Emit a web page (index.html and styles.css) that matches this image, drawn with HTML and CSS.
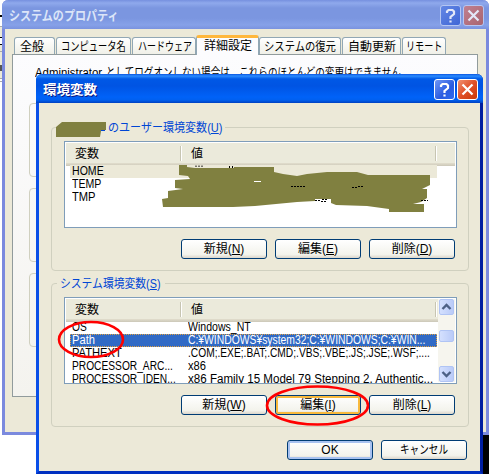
FILE: index.html
```html
<!DOCTYPE html>
<html lang="ja">
<head>
<meta charset="utf-8">
<title>環境変数</title>
<link rel="stylesheet" href="styles.css">
</head>
<body>
<div class="desktop">
  <div class="behind"></div>
  <div class="dark"></div>

  <section class="window inactive">
    <header class="titlebar">
      <h1><b class="t-prop">システムのプロパティ</b></h1>
      <span class="cap help"><svg viewBox="0 0 21 21"><path d="M7 8V6.500L8.500 5h4L14 6.500v2.500L10.500 12v2M10.500 15.500v2"/></svg></span>
      <span class="cap close"><svg viewBox="0 0 21 21"><path d="M5.500 5.500l10 10M15.500 5.500l-10 10"/></svg></span>
    </header>
    <div class="props">
      <nav class="tabs">
        <span class="tab w1"><b>全般</b></span>
        <span class="tab w2"><b>コンピュータ名</b></span>
        <span class="tab w3"><b>ハードウェア</b></span>
        <span class="tab w4 active"><b>詳細設定</b></span>
        <span class="tab w5"><b>システムの復元</b></span>
        <span class="tab w6"><b>自動更新</b></span>
        <span class="tab w7"><b>リモート</b></span>
      </nav>
      <div class="page">
        <p><span class="latin"><b>Administrator</b></span><b>としてログオンしない場合は、これらのほとんどの変更はできません。</b></p>
        <div class="box b1"></div>
        <div class="box b2"></div>
        <div class="box b3"></div>
      </div>
    </div>
  </section>

  <section class="window dialog">
    <header class="titlebar">
      <h1><b class="t-env">環境変数</b></h1>
      <span class="cap help"><svg viewBox="0 0 21 21"><path d="M7 8V6.500L8.500 5h4L14 6.500v2.500L10.500 12v2M10.500 15.500v2"/></svg></span>
      <span class="cap close"><svg viewBox="0 0 21 21"><path d="M5.500 5.500l10 10M15.500 5.500l-10 10"/></svg></span>
    </header>
    <div class="body">
      <fieldset class="group user">
        <legend><b>のユーザー環境変数(<u>U</u>)</b></legend>
        <div class="list">
          <div class="head"><span class="c1">変数</span><span class="c2">値</span></div>
          <div class="rows">
            <div class="row soft"><span class="c1"><b class="s88">HOME</b></span></div>
            <div class="row"><span class="c1"><b class="s88">TEMP</b></span></div>
            <div class="row"><span class="c1"><b class="s92">TMP</b></span></div>
          </div>
        </div>
        <div class="buttons">
          <button>新規(<u>N</u>)</button><button>編集(<u>E</u>)</button><button>削除(<u>D</u>)</button>
        </div>
      </fieldset>
      <fieldset class="group system">
        <legend><b>システム環境変数(<u>S</u>)</b></legend>
        <div class="list">
          <div class="head"><span class="c1">変数</span><span class="c2">値</span></div>
          <div class="rows">
            <div class="row"><span class="c1"><b class="s85">OS</b></span><span class="c2"><b class="s88">Windows_NT</b></span></div>
            <div class="row selected"><span class="c1"><b class="s92">Path</b></span><span class="c2"><b class="s86">C:¥WINDOWS¥system32;C:¥WINDOWS;C:¥WIN...</b></span></div>
            <div class="row"><span class="c1"><b class="s92">PATHEXT</b></span><span class="c2"><b class="s85">.COM;.EXE;.BAT;.CMD;.VBS;.VBE;.JS;.JSE;.WSF;....</b></span></div>
            <div class="row"><span class="c1"><b class="s85">PROCESSOR_ARC...</b></span><span class="c2"><b class="s92">x86</b></span></div>
            <div class="row"><span class="c1"><b class="s85">PROCESSOR_IDEN...</b></span><span class="c2"><b class="s97">x86 Family 15 Model 79 Stepping 2, Authentic...</b></span></div>
          </div>
          <div class="scroll">
            <span class="arrow"><svg viewBox="0 0 15 16"><path d="M3.500 10l4-4 4 4"/></svg></span>
            <span class="thumb"></span>
            <span class="arrow"><svg viewBox="0 0 15 16"><path d="M3.500 6l4 4 4-4"/></svg></span>
          </div>
        </div>
        <div class="buttons">
          <button>新規(<u>W</u>)</button><button class="hot">編集(<u>I</u>)</button><button>削除(<u>L</u>)</button>
        </div>
      </fieldset>
      <div class="buttons actions"><button class="default">OK</button><button class="cancel"><b>キャンセル</b></button></div>
    </div>
  </section>

  <svg class="marks" viewBox="0 0 489 474">
    <g class="paint">
      <path d="M56 127l6-5h44v8h-5v1l-1 6H56z"/>
      <path d="M179 165h8v2l8 1h39v-1h40v5l9 2 14 2 10-2 20-2h30l11 3h62v10l-8 4h5v9l-6 4-8 2h11v8h-35v-3l-22-3-31-1-5-2v-4h-16v2l-18 1-42 4-22 1h-70l-1-8 6-1v-7l15-2-8-1v-8l15-1-2-3-9-1z"/>
    </g>
    <path class="scraps" d="M196 167v-1.500M199 167v-1.500M202 167v-1.500M229.500 168v-2M232.500 168v-2M291 186.500h15M352 187.500h5M358 186.500h5M315 200.500h5M321 201.500h6M322 199.500h6M421 200.500h7"/>
    <path class="gap" d="M254 181.500h7"/>
    <path class="tail" d="M101 130.500h4"/>
    <ellipse cx="91" cy="339.500" rx="32" ry="17.500"/>
    <ellipse cx="317.500" cy="405.500" rx="50.500" ry="19"/>
  </svg>
</div>
</body>
</html>
```
FILE: styles.css
```css
* { box-sizing: border-box; }
body { margin: 0; }
.desktop {
  position: relative; width: 489px; height: 474px; overflow: hidden; background: #fff;
  font: 12px/13px "Liberation Sans", "Noto Sans CJK JP", sans-serif; color: #000;
}
.behind {
  position: absolute; left: 0; top: 0; width: 4px; height: 82px;
  background: linear-gradient(#fff 15px, #000 15px 17px, #fff 17px 26px, #aaa 26px 27px, #ece9d8 27px 37px, #000 37px 38px, #fff 38px 44px, #000 44px 45px, #ece9d8 45px 51px, #aaa 51px 52px, #ece9d8 52px 65px, #555 65px 71px, #ece9d8 71px 78px, #aaa 78px 79px, #fff 79px 81px, #aaa 81px);
}
.dark { position: absolute; left: 483px; top: 435px; width: 6px; height: 39px; background: #000; }

.window { position: absolute; border-style: solid; border-width: 0 3px 3px; background: #ece9d8; }
.inactive { left: 2px; top: 0; width: 487px; height: 435px; border-color: #7b8ade; border-radius: 6px 6px 0 0; }
.dialog { left: 36px; top: 74px; width: 447px; height: 400px; border-color: #0a4fe8; border-right-color: #001ea0; border-bottom-color: #0030c0; border-radius: 6px 6px 0 0; }
.titlebar { display: flex; align-items: center; gap: 2px; height: 29px; margin: 0 -3px; padding: 2px 5px 0 7px; border-radius: 6px 6px 0 0; }
.inactive .titlebar { background: linear-gradient(#7690df 0, #8fa9ec 3px, #7b96e0 8px, #7b96e0 18px, #86a1e8 25px, #7a93df 29px); }
.dialog .titlebar { background: linear-gradient(#0a55e0 0, #2b8cff 2px, #0058e6 5px, #0054e3 12px, #0062f8 23px, #0060f0 26px, #0040c0 29px); }
h1 { flex: 1; margin: 0; font-size: 13px; line-height: 16px; font-weight: 700; color: #fff; white-space: nowrap; }
.inactive h1 { color: #dce5f8; }
.dialog h1 { text-shadow: 1px 1px #0a1883; }
.cap { width: 21px; height: 21px; border: 1px solid #fff; border-radius: 3px; }
.cap svg { display: block; width: 21px; height: 21px; margin: -1px; fill: none; stroke: #fff; stroke-width: 2.200; }
.help { background: linear-gradient(135deg, #6f97f5, #2a5be0 60%, #2f6bf0); }
.close { background: linear-gradient(135deg, #f09070, #e05028 50%, #c83808); }
.inactive .cap { border-color: #b5c6f2; }
.inactive .help { background: linear-gradient(135deg, #6387e4, #3f66d6); }
.inactive .close { background: linear-gradient(135deg, #c08090, #a9646f); }
.inactive .cap svg { stroke: #e3e8f8; }

/* Condensed faces: each label is narrowed from its left edge. */
b { display: inline-block; font-weight: inherit; transform-origin: 0 50%; white-space: nowrap; }
.t-prop { transform: scaleX(.85); }
.t-env { transform: scaleX(1.04); }
.s85 { transform: scaleX(.85); }
.s86 { transform: scaleX(.862); }
.s88 { transform: scaleX(.88); }
.s92 { transform: scaleX(.93); }
.s97 { transform: scaleX(.965); }

.props { padding: 6px 0 0 7px; }
.tabs { display: flex; align-items: flex-end; height: 19px; padding-left: 2px; }
.tab { height: 17px; margin-right: 1px; padding-left: 5px; border: 1px solid #91a7b4; border-bottom: 0; border-radius: 3px 3px 0 0; background: linear-gradient(#fff, #f0f0e8); line-height: 19px; white-space: nowrap; }
.w1 { width: 41px; }
.w2 { width: 75px; padding-left: 4px; }
.w3 { width: 64px; margin-right: 0; }
.w4 { width: 63px; margin-right: 0; padding-left: 7px; }
.w5 { width: 82px; padding-left: 4px; }
.w6 { width: 59px; }
.w7 { width: 44px; padding-left: 3px; }
.w2 b { transform: scaleX(.77); }
.w3 b { transform: scaleX(.75); }
.w5 b { transform: scaleX(.86); }
.w7 b { transform: scaleX(.76); }
.tab.active { height: 20px; margin-bottom: -1px; border-top: 3px solid #ffb73c; border-color: #ffb73c #91a7b4; background: #fcfcfe; line-height: 17px; z-index: 1; }
.page { width: 466px; height: 343px; padding: 10px 0 0 16px; border: 1px solid #919b9c; background: linear-gradient(#fcfcfe, #f4f3ee); overflow: hidden; }
.page p { display: flex; margin: 0 0 0 6px; white-space: nowrap; line-height: 16px; }
.latin { width: 73px; }
.page .latin b { transform: scaleX(.95); }
.page p b { transform: scaleX(.795); }
.box { width: 420px; border: 1px solid #d0d0bf; border-radius: 4px; }
.b1 { height: 74px; margin-top: 22px; }
.b2, .b3 { height: 74px; margin-top: 11px; }

.body { padding: 24px 12px 0; }
.group { position: relative; width: 418px; height: 144px; margin: 0; padding: 13px 12px 0; border: 1px solid #d0d0bf; border-radius: 4px; min-width: 0; }
.system { margin-top: 12px; }
legend { position: absolute; left: 5px; top: -8px; width: 108px; height: 16px; padding: 0 3px; line-height: 16px; background: #ece9d8; color: #0046d5; white-space: nowrap; }
.user legend { width: 168px; padding-left: 51px; }
.user legend b { transform: scaleX(.92); }
.system legend b { transform: scaleX(.9); }
.list { position: relative; width: 393px; height: 87px; border: 1px solid #7f9db9; background: #fff; overflow: hidden; }
.head { display: flex; height: 23px; margin: 1px 1px 0; padding-left: 9px; background: linear-gradient(#ebeadb 20px, #e2decd 20px, #cbc7b8); }
.head .c1, .head .c2 { height: 15px; margin-top: 3px; line-height: 16px; border-right: 1px solid #c7c5b2; box-shadow: 1px 0 #fff; }
.head .c1 { width: 106px; }
.head .c2 { width: 255px; padding-left: 10px; }
.rows { margin-top: -1px; padding-left: 5px; }
.row { display: flex; height: 13px; width: 367px; padding-left: 2px; white-space: nowrap; overflow: hidden; }
.row .c1 { flex: none; width: 116px; }
.row .c2 { flex: none; width: 248px; }
.soft { background: #ece9d8; }
.selected { background: #316ac5; color: #fff; outline: 1px dotted #e0a040; outline-offset: -1px; }
.scroll { position: absolute; right: 1px; top: 1px; width: 17px; height: 83px; display: flex; flex-direction: column; padding: 0 1px; background: #f6f5ee; }
.arrow, .thumb { flex: none; height: 16px; border: 1px solid #b0c4f4; border-radius: 2px; background: linear-gradient(90deg, #d4e0fe, #bacbf8); }
.arrow svg { display: block; width: 15px; height: 16px; margin: -1px; fill: none; stroke: #4d6185; stroke-width: 2.400; }
.thumb { height: 12px; margin: 15px 0 24px; }
.buttons { display: flex; justify-content: flex-end; gap: 8px; margin: 11px 0 0; padding-right: 1px; }
button { width: 86px; height: 20px; padding: 0; border: 1px solid #003c74; border-radius: 3px; background: linear-gradient(#fff, #f3f3ec 80%, #dcd6cb); font: inherit; line-height: 17px; color: #000; white-space: nowrap; }
.hot { box-shadow: inset 0 0 0 2px #f8b93c; }
.default { box-shadow: inset 0 0 0 2px #a8c2f0; }
.cancel b { transform: scaleX(.8); transform-origin: 50% 50%; }
.actions { margin: 13px 0 0; }
.marks { position: absolute; inset: 0; width: 489px; height: 474px; fill: none; stroke: #f00; stroke-width: 2.600; }
.paint { fill: #808040; stroke: none; }
.scraps { stroke: #000; stroke-width: 1; stroke-dasharray: 2 1; }
.gap { stroke: #fff; stroke-width: 1; }
.tail { stroke: #0046d5; stroke-width: 1; }
```
